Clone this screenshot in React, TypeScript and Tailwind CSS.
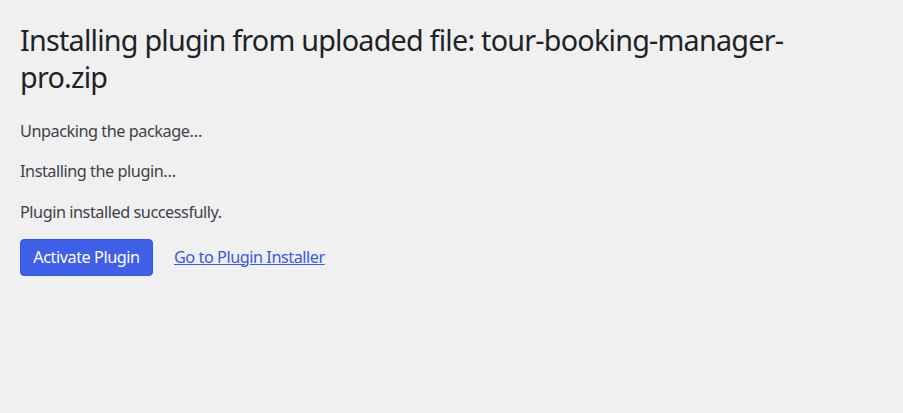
export default function App() {
  return (
    <div className="min-h-screen w-full bg-[#f0f0f1] px-5 pt-[21px] font-['Noto_Sans',sans-serif]">
      <h1 className="m-0 max-w-[800px] text-[28.75px] font-normal leading-[37.4px] tracking-[-0.78px] text-[#1d2327]">
        Installing plugin from uploaded file: tour-booking-manager-pro.zip
      </h1>

      <div className="mt-[23px] flex flex-col gap-[16.25px] text-[16.25px] leading-[24.4px] tracking-[-0.46px] text-[#3c434a]">
        <p>Unpacking the package…</p>
        <p>Installing the plugin…</p>
        <p>Plugin installed successfully.</p>
      </div>

      <div className="mt-[14px] flex items-center gap-[21px] text-[16.25px] tracking-[-0.46px]">
        <a
          href="#"
          className="flex h-[37px] w-[133px] items-center justify-center rounded-[4px] border border-[#3355e6] bg-[#3f5fe8] text-white"
        >
          Activate Plugin
        </a>
        <a href="#" className="text-[#3858e9] underline">
          Go to Plugin Installer
        </a>
      </div>
    </div>
  );
}
